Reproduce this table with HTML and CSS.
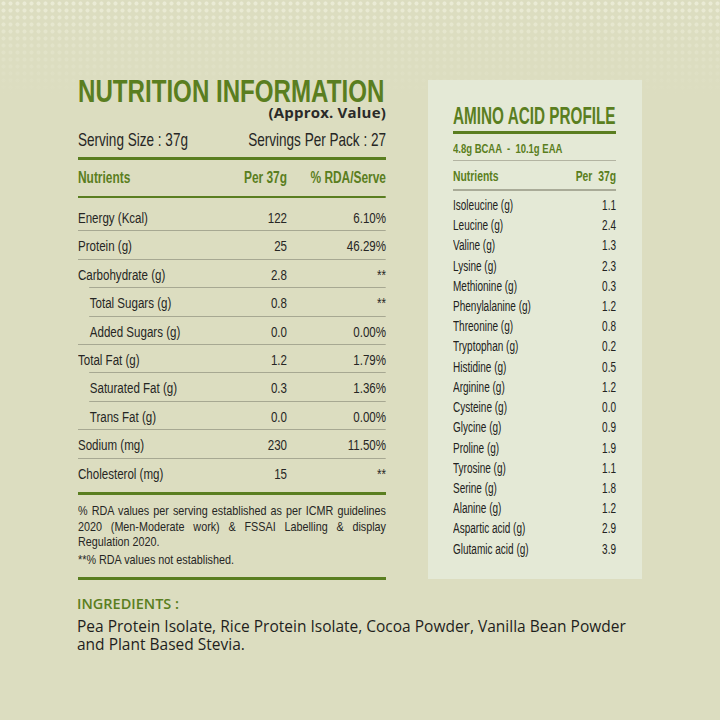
FILE: index.html
```html
<!DOCTYPE html>
<html lang="en">
<head>
<meta charset="utf-8">
<title>Nutrition Information</title>
<link rel="stylesheet" href="styles.css">
</head>
<body>
<div class="page">
  <div class="main">
    <section class="nutri">
      <div class="sq sq-title"><h1 class="title">NUTRITION INFORMATION</h1></div>
      <div class="approx">(Approx. Value)</div>
      <div class="sq sq-serving"><div class="serving"><span>Serving Size : 37g</span><span>Servings Per Pack : 27</span></div></div>
      <div class="rule thick rule-top"></div>
      <div class="sq sq-table">
        <div class="table">
          <div class="nrow head"><span>Nutrients</span><span class="num">Per 37g</span><span class="num">% RDA/Serve</span></div>
          <div class="rule thin"></div>
          <div class="nrow first"><span>Energy (Kcal)</span><span class="num">122</span><span class="num">6.10%</span></div>
          <div class="nrow"><span>Protein (g)</span><span class="num">25</span><span class="num">46.29%</span></div>
          <div class="nrow"><span>Carbohydrate (g)</span><span class="num">2.8</span><span class="num">**</span></div>
          <div class="nrow sub"><span>Total Sugars (g)</span><span class="num">0.8</span><span class="num">**</span></div>
          <div class="nrow sub"><span>Added Sugars (g)</span><span class="num">0.0</span><span class="num">0.00%</span></div>
          <div class="nrow"><span>Total Fat (g)</span><span class="num">1.2</span><span class="num">1.79%</span></div>
          <div class="nrow sub"><span>Saturated Fat (g)</span><span class="num">0.3</span><span class="num">1.36%</span></div>
          <div class="nrow sub"><span>Trans Fat (g)</span><span class="num">0.0</span><span class="num">0.00%</span></div>
          <div class="nrow"><span>Sodium (mg)</span><span class="num">230</span><span class="num">11.50%</span></div>
          <div class="nrow"><span>Cholesterol (mg)</span><span class="num">15</span><span class="num">**</span></div>
        </div>
      </div>
      <div class="rule thick rule-mid"></div>
      <div class="sq sq-foot">
        <div class="foot">
          <span class="fl">% RDA values per serving established as per ICMR guidelines</span>
          <span class="fl">2020 (Men-Moderate work) &amp; FSSAI Labelling &amp; display</span>
          <span class="fl last">Regulation 2020.</span>
          <span class="fnote">**% RDA values not established.</span>
        </div>
      </div>
      <div class="rule thick rule-end"></div>
    </section>
    <aside class="amino">
      <div class="sq sq-atitle"><h2 class="atitle">AMINO ACID PROFILE</h2></div>
      <div class="rule athick"></div>
      <div class="sq sq-bcaa"><div class="bcaa">4.8g BCAA  -  10.1g EAA</div></div>
      <div class="rule agray"></div>
      <div class="sq sq-atable">
        <div class="atable">
          <div class="arow ahead"><span>Nutrients</span><span>Per&nbsp; 37g</span></div>
          <div class="rule agray2"></div>
          <div class="arows">
            <div class="arow"><span>Isoleucine (g)</span><span>1.1</span></div>
            <div class="arow"><span>Leucine (g)</span><span>2.4</span></div>
            <div class="arow"><span>Valine (g)</span><span>1.3</span></div>
            <div class="arow"><span>Lysine (g)</span><span>2.3</span></div>
            <div class="arow"><span>Methionine (g)</span><span>0.3</span></div>
            <div class="arow"><span>Phenylalanine (g)</span><span>1.2</span></div>
            <div class="arow"><span>Threonine (g)</span><span>0.8</span></div>
            <div class="arow"><span>Tryptophan (g)</span><span>0.2</span></div>
            <div class="arow"><span>Histidine (g)</span><span>0.5</span></div>
            <div class="arow"><span>Arginine (g)</span><span>1.2</span></div>
            <div class="arow"><span>Cysteine (g)</span><span>0.0</span></div>
            <div class="arow"><span>Glycine (g)</span><span>0.9</span></div>
            <div class="arow"><span>Proline (g)</span><span>1.9</span></div>
            <div class="arow"><span>Tyrosine (g)</span><span>1.1</span></div>
            <div class="arow"><span>Serine (g)</span><span>1.8</span></div>
            <div class="arow"><span>Alanine (g)</span><span>1.2</span></div>
            <div class="arow"><span>Aspartic acid (g)</span><span>2.9</span></div>
            <div class="arow"><span>Glutamic acid (g)</span><span>3.9</span></div>
          </div>
        </div>
      </div>
    </aside>
  </div>
  <div class="ingredients">
    <div class="ing-title">INGREDIENTS :</div>
    <p class="ing-text">Pea Protein Isolate, Rice Protein Isolate, Cocoa Powder, Vanilla Bean Powder and Plant Based Stevia.</p>
  </div>
</div>
</body>
</html>
```

FILE: styles.css
```css
* { box-sizing: border-box; }

html, body {
  margin: 0;
  padding: 0;
}

body {
  width: 720px;
  height: 720px;
  overflow: hidden;
  color: #262624;
  font-family: "Liberation Sans", Arial, sans-serif;
  background:
    linear-gradient(to bottom, rgba(220, 221, 192, 0) 0px, rgba(220, 221, 192, 0.6) 45px, #dcddc0 95px),
    radial-gradient(circle, rgba(240, 241, 222, 0.75) 1.6px, rgba(240, 241, 222, 0) 2.4px) 0 0 / 7px 7px,
    #dcddc0;
}

.page {
  padding: 78px 0 0 78px;
}

.main {
  display: flex;
  align-items: flex-start;
  gap: 42px;
}

/* condensed type: a block laid out wider, then squeezed horizontally */
.sq > * {
  width: calc(100% / var(--s));
  transform: scaleX(var(--s));
  transform-origin: 0 0;
}

.sq-title   { --s: 0.778; }
.sq-serving { --s: 0.745; }
.sq-table   { --s: 0.745; }
.sq-foot    { --s: 0.83; }
.sq-atitle  { --s: 0.637; }
.sq-bcaa    { --s: 0.73; }
.sq-atable  { --s: 0.715; }

/* ---------- Nutrition table ---------- */
.nutri {
  flex: none;
  width: 308px;
}

.title {
  margin: 0;
  font-size: 31px;
  line-height: 28px;
  font-weight: 700;
  color: #5a7e20;
  white-space: nowrap;
}

.approx {
  margin-top: 0;
  text-align: right;
  font-family: "Open Sans", "Lato", sans-serif;
  font-weight: 700;
  font-size: 15px;
  line-height: 12px;
  letter-spacing: 0.2px;
  color: #2a2a28;
}

.sq-serving {
  margin-top: 11.7px;
}

.serving {
  display: flex;
  justify-content: space-between;
  font-size: 18.2px;
  line-height: 20px;
  color: #262624;
  white-space: nowrap;
}

.rule {
  background: #5a7e20;
}

.rule.thick {
  height: 3px;
}

.rule-top { margin-top: 7px; }
.rule-mid { margin-top: 6px; }
.rule-end { margin-top: 9.7px; }

.rule.thin {
  height: 2.5px;
  margin-top: 8.6px;
}

.sq-table {
  margin-top: 9.35px;
}

.nrow {
  display: grid;
  grid-template-columns: 1fr 80.5px 132.9px;
  align-items: baseline;
  font-size: 15.5px;
  line-height: 25.4px;
  padding-top: 2px;
  border-top: 1px solid #a7a892;
  white-space: nowrap;
}

.nrow .num {
  text-align: right;
}

.nrow.head {
  padding-top: 0;
  border-top: 0;
  font-size: 16px;
  line-height: 18px;
  font-weight: 700;
  color: #5a7e20;
}

.nrow.first {
  border-top: 0;
  padding-top: 6.85px;
}

.nrow.sub {
  margin-left: 14.8px;
}

.nrow.sub span:first-child {
  padding-left: 1px;
}

.sq-foot {
  margin-top: 8.45px;
}

.foot {
  font-size: 13px;
  line-height: 15.3px;
  color: #262624;
}

.fl {
  display: block;
  text-align: justify;
  text-align-last: justify;
  white-space: nowrap;
}

.fl.last {
  text-align: left;
  text-align-last: left;
}

.fnote {
  display: block;
  margin-top: 3.1px;
}

/* ---------- Amino panel ---------- */
.amino {
  flex: none;
  margin-top: 2px;
  width: 214px;
  height: 499px;
  padding: 22.5px 26px 0 25px;
  background: #e4e9d6;
}

.atitle {
  margin: 0;
  font-size: 24px;
  line-height: 25px;
  font-weight: 700;
  color: #5a7e20;
  white-space: nowrap;
}

.rule.athick {
  height: 3px;
  margin-top: 3.5px;
}

.sq-bcaa {
  margin-top: 7.3px;
}

.bcaa {
  font-size: 13px;
  line-height: 15px;
  font-weight: 700;
  color: #5a7e20;
  white-space: pre;
}

.rule.agray {
  height: 1px;
  margin-top: 4.2px;
  background: #b3b4a2;
}

.sq-atable {
  margin-top: 6.65px;
}

.arow {
  display: flex;
  justify-content: space-between;
  font-size: 14px;
  line-height: 20.2px;
  color: #222220;
  white-space: nowrap;
}

.arow.ahead {
  font-size: 14.5px;
  line-height: 16px;
  font-weight: 700;
  color: #5a7e20;
}

.rule.agray2 {
  height: 2px;
  margin-top: 4.85px;
  background: #a9ab98;
}

.arows {
  margin-top: 4.1px;
}

/* ---------- Ingredients ---------- */
.ingredients {
  margin-top: 14.2px;
  margin-left: -1px;
  width: 574px;
}

.ing-title {
  font-family: "Open Sans", "Lato", sans-serif;
  font-weight: 600;
  font-size: 14.5px;
  line-height: 17px;
  color: #5a7e20;
}

.ing-text {
  margin: 5.2px 0 0;
  font-family: "Open Sans", "Lato", sans-serif;
  font-size: 15.5px;
  line-height: 18px;
  color: #1f1f1d;
}
```
